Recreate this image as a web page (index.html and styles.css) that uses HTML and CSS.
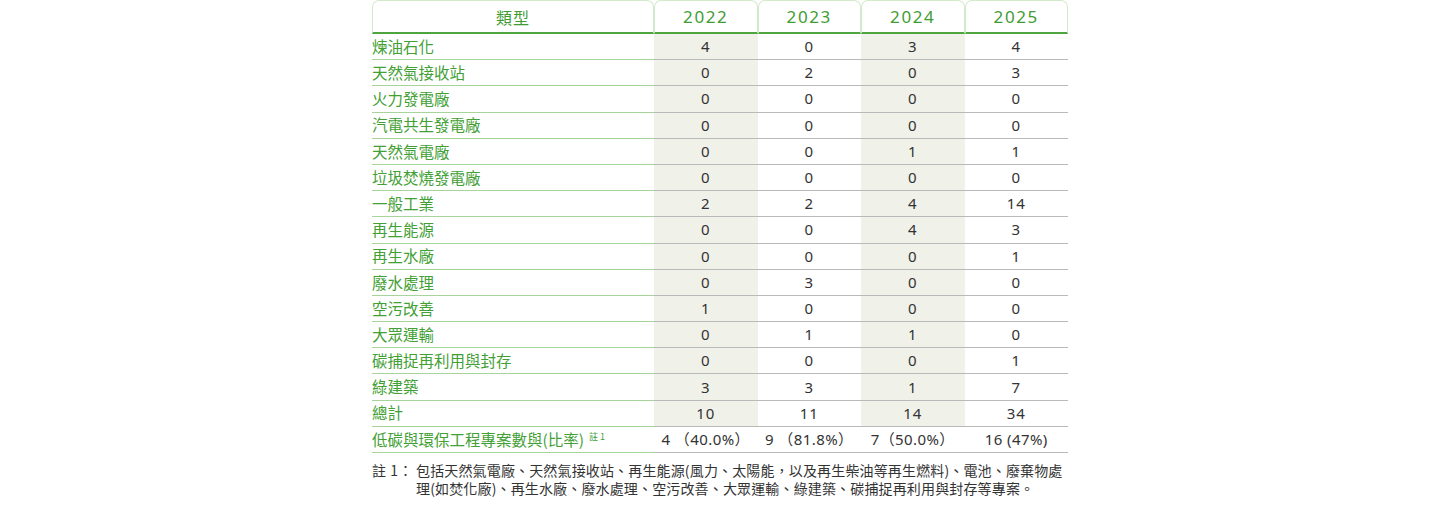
FILE: index.html
```html
<!DOCTYPE html>
<html lang="zh-Hant">
<head>
<meta charset="utf-8">
<title>低碳與環保工程專案</title>
<link rel="stylesheet" href="styles.css">
</head>
<body>
<div class="wrap">
  <table class="data">
    <colgroup>
      <col class="c-type"><col class="c-y"><col class="c-y"><col class="c-y"><col class="c-y">
    </colgroup>
    <thead>
      <tr><th>類型</th><th class="yr">2022</th><th class="yr">2023</th><th class="yr">2024</th><th class="yr">2025</th></tr>
    </thead>
    <tbody>
      <tr><td class="lab">煉油石化</td><td class="sh">4</td><td>0</td><td class="sh">3</td><td>4</td></tr>
      <tr><td class="lab">天然氣接收站</td><td class="sh">0</td><td>2</td><td class="sh">0</td><td>3</td></tr>
      <tr><td class="lab">火力發電廠</td><td class="sh">0</td><td>0</td><td class="sh">0</td><td>0</td></tr>
      <tr><td class="lab">汽電共生發電廠</td><td class="sh">0</td><td>0</td><td class="sh">0</td><td>0</td></tr>
      <tr><td class="lab">天然氣電廠</td><td class="sh">0</td><td>0</td><td class="sh">1</td><td>1</td></tr>
      <tr><td class="lab">垃圾焚燒發電廠</td><td class="sh">0</td><td>0</td><td class="sh">0</td><td>0</td></tr>
      <tr><td class="lab">一般工業</td><td class="sh">2</td><td>2</td><td class="sh">4</td><td>14</td></tr>
      <tr><td class="lab">再生能源</td><td class="sh">0</td><td>0</td><td class="sh">4</td><td>3</td></tr>
      <tr><td class="lab">再生水廠</td><td class="sh">0</td><td>0</td><td class="sh">0</td><td>1</td></tr>
      <tr><td class="lab">廢水處理</td><td class="sh">0</td><td>3</td><td class="sh">0</td><td>0</td></tr>
      <tr><td class="lab">空污改善</td><td class="sh">1</td><td>0</td><td class="sh">0</td><td>0</td></tr>
      <tr><td class="lab">大眾運輸</td><td class="sh">0</td><td>1</td><td class="sh">1</td><td>0</td></tr>
      <tr><td class="lab">碳捕捉再利用與封存</td><td class="sh">0</td><td>0</td><td class="sh">0</td><td>1</td></tr>
      <tr><td class="lab">綠建築</td><td class="sh">3</td><td>3</td><td class="sh">1</td><td>7</td></tr>
      <tr><td class="lab">總計</td><td class="sh">10</td><td>11</td><td class="sh">14</td><td>34</td></tr>
      <tr class="last"><td class="lab">低碳與環保工程專案數與(比率)<sup>註 1</sup></td><td>4 （40.0%）</td><td>9 （81.8%）</td><td>7（50.0%）</td><td>16 (47%)</td></tr>
    </tbody>
  </table>
  <div class="note">
    <span class="note-lab">註 1：</span>
    <span class="note-txt">包括天然氣電廠、天然氣接收站、再生能源(風力、太陽能，以及再生柴油等再生燃料)、電池、廢棄物處<br>理(如焚化廠)、再生水廠、廢水處理、空污改善、大眾運輸、綠建築、碳捕捉再利用與封存等專案。</span>
  </div>
</div>
</body>
</html>
```
FILE: styles.css
```css
html, body {
  margin: 0;
  padding: 0;
  background: #ffffff;
}
body {
  font-family: "Noto Sans CJK TC", "Noto Sans", sans-serif;
  color: #333333;
}
.wrap {
  width: 696px;
  margin: 0 auto;
  padding-top: 0;
}
.data {
  width: 696px;
  border-collapse: separate;
  border-spacing: 0;
  table-layout: fixed;
}
.c-type { width: 282px; }
.c-y { width: 103.5px; }

.data th {
  height: 31px;
  padding: 0;
  font-weight: 400;
  font-size: 16px;
  color: #3f9c33;
  letter-spacing: 1px;
  text-align: center;
  border: 1px solid #d3e9cc;
  border-bottom: 2px solid #4ea53f;
  border-radius: 7px 7px 0 0;
  vertical-align: middle;
}
.data th.yr {
  font-family: "Noto Sans", sans-serif;
  font-size: 17px;
  letter-spacing: 1.6px;
}
.data td {
  height: 25.2px;
  padding: 0;
  text-align: center;
  vertical-align: middle;
  font-family: "Noto Sans", "Noto Sans CJK TC", sans-serif;
  font-size: 15px;
  letter-spacing: 0.8px;
  color: #333333;
  border-bottom: 1px solid #b9b9b9;
  line-height: 1;
}
.data td.lab {
  text-align: left;
  font-family: "Noto Sans CJK TC", sans-serif;
  font-size: 15.5px;
  letter-spacing: 0;
  color: #42a035;
  border-bottom: 1px solid #a7d49a;
}
.data td.sh {
  background: #f0f2ea;
}
.data tr.last td {
  font-size: 15px;
  letter-spacing: 0.4px;
  white-space: nowrap;
}
.data tr.last td.lab {
  font-size: 15.5px;
  letter-spacing: 0;
}
.data sup {
  font-size: 9px;
  vertical-align: 6px;
  margin-left: 5px;
  letter-spacing: 0;
}
.note {
  display: flex;
  margin-top: 8px;
  font-size: 14px;
  letter-spacing: 0.15px;
  line-height: 18px;
  color: #333333;
}
.note-lab {
  flex: 0 0 44px;
  white-space: nowrap;
  letter-spacing: 0.5px;
}
.note-txt {
  flex: 1 1 auto;
  white-space: nowrap;
}
```
